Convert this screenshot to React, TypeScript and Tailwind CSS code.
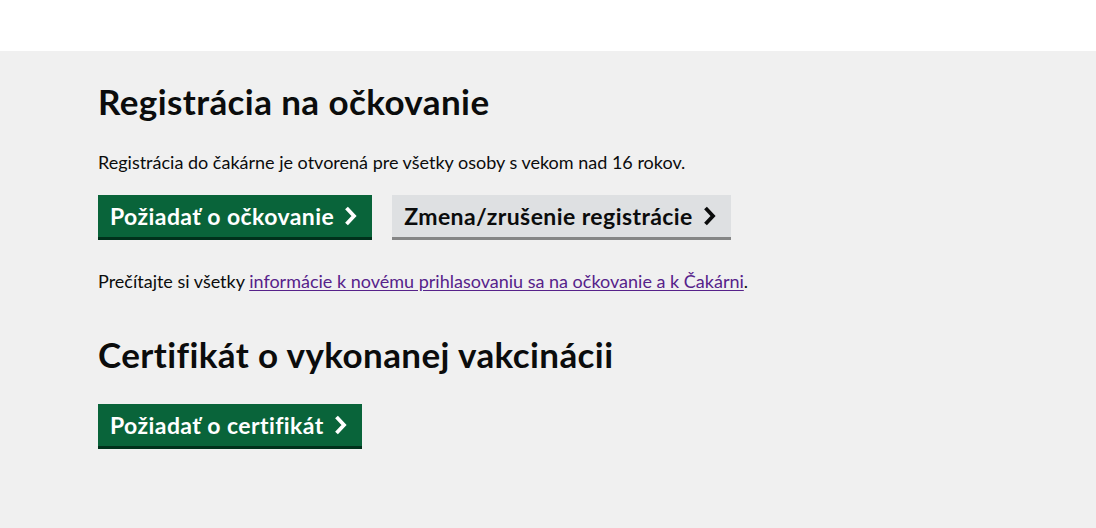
import React from 'react';

const Chevron: React.FC<{ className?: string }> = ({ className }) => (
  <svg viewBox="0 0 13 20" className={className} fill="none" stroke="currentColor" strokeWidth="3.8" strokeLinecap="butt" strokeLinejoin="miter">
    <path d="M2.5 2 L10 10 L2.5 18" />
  </svg>
);

const App: React.FC = () => {
  return (
    <div className="min-h-[528px] bg-[#f0f0f0] text-[#0b0c0c]" style={{ fontFamily: 'Lato, "Noto Sans", sans-serif' }}>
      <div className="h-[51px] bg-white" />
      <main className="pl-[98px] pt-[28px] pb-[59px]">
        <h1 className="text-[35px] font-bold leading-[44px] tracking-[0.4px]">Registrácia na očkovanie</h1>
        <p className="mt-[27px] text-[18px] leading-[25px]">
          Registrácia do čakárne je otvorená pre všetky osoby s vekom nad 16 rokov.
        </p>
        <div className="mt-[20px] flex gap-[20px]">
          <button className="flex h-[45px] items-center gap-[10px] border-b-[3px] border-[#00311b] bg-[#09643a] pl-[12px] pr-[15px] text-[23px] font-bold tracking-[0.42px] text-white">
            Požiadať o očkovanie <Chevron className="h-[20px] w-[13px]" />
          </button>
          <button className="flex h-[45px] items-center gap-[10px] border-b-[3px] border-[#858686] bg-[#dee0e2] pl-[12px] pr-[15px] text-[23px] font-bold tracking-[0.42px] text-[#0b0c0c]">
            Zmena/zrušenie registrácie <Chevron className="h-[20px] w-[13px]" />
          </button>
        </div>
        <p className="mt-[29px] text-[18px] leading-[25px]">
          Prečítajte si všetky{' '}
          <a href="#" className="text-[#56228a] underline underline-offset-2">
            informácie k novému prihlasovaniu sa na očkovanie a k Čakárni
          </a>
          .
        </p>
        <h2 className="mt-[38px] text-[35px] font-bold leading-[44px] tracking-[0.4px]">Certifikát o vykonanej vakcinácii</h2>
        <div className="mt-[28px] flex">
          <button className="flex h-[45px] items-center gap-[10px] border-b-[3px] border-[#00311b] bg-[#09643a] pl-[12px] pr-[15px] text-[23px] font-bold tracking-[0.42px] text-white">
            Požiadať o certifikát <Chevron className="h-[20px] w-[13px]" />
          </button>
        </div>
      </main>
    </div>
  );
};

export default App;
